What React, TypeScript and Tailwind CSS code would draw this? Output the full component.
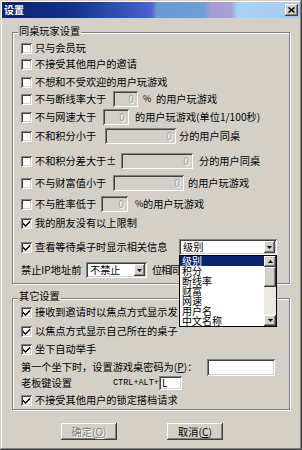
import React from "react";

const sunken =
  "shadow-[inset_1px_1px_#808080,inset_-1px_-1px_#ffffff,inset_2px_2px_#404040,inset_-2px_-2px_#d4d0c8]";
const raised =
  "shadow-[inset_-1px_-1px_#404040,inset_1px_1px_#ffffff,inset_-2px_-2px_#808080,inset_2px_2px_#d4d0c8]";

function Check({ checked }: { checked?: boolean }) {
  return (
    <div
      className={`w-[11px] h-[11px] shrink-0 bg-white ${sunken} flex items-center justify-center`}
    >
      {checked && (
        <svg width="7" height="7" viewBox="0 0 7 7">
          <path d="M0 2.5 L2.5 5 L7 0.5 L7 2.5 L2.5 7 L0 4.5 Z" fill="#000" />
        </svg>
      )}
    </div>
  );
}

function Row({ mt, children }: { mt: string; children: React.ReactNode }) {
  return <div className={`flex items-center h-[16px] whitespace-nowrap ${mt}`}>{children}</div>;
}

function CbRow({
  mt,
  checked,
  label,
  children,
}: {
  mt: string;
  checked?: boolean;
  label?: React.ReactNode;
  children?: React.ReactNode;
}) {
  return (
    <Row mt={mt}>
      <Check checked={checked} />
      <div className="ml-[3px] flex items-center">{label}</div>
      {children}
    </Row>
  );
}

function DisInput({ w }: { w: string }) {
  return (
    <div
      className={`${sunken} ${w} bg-[#d4d0c8] h-[16px] shrink-0 flex items-center justify-end pr-[4px] text-[#a4a4a4] [text-shadow:1px_1px_#ffffff]`}
    >
      0
    </div>
  );
}

function Arrow({ up }: { up?: boolean }) {
  return (
    <svg width="5" height="3" viewBox="0 0 5 3">
      <path d={up ? "M0 3H5L2.5 0Z" : "M0 0H5L2.5 3Z"} fill="#000" />
    </svg>
  );
}

function Select({ w, text }: { w: string; text: string }) {
  return (
    <div className={`${sunken} ${w} bg-white h-[16px] shrink-0 flex items-center pl-[4px] pr-[2px]`}>
      <span className="flex-1">{text}</span>
      <div className={`${raised} bg-[#d4d0c8] w-[11px] h-[12px] flex items-center justify-center`}>
        <Arrow />
      </div>
    </div>
  );
}

export default function App() {
  const items = ["级别", "积分", "断线率", "财富", "网速", "用户名", "中文名称"];
  return (
    <div className="relative w-[302px] h-[450px] overflow-hidden bg-[#d4d0c8] p-[2px] font-['Noto_Sans_CJK_SC','Noto_Sans',sans-serif] text-[10.2px] leading-[12px] text-black shadow-[inset_-1px_-1px_#404040,inset_1px_1px_#d4d0c8,inset_-2px_-2px_#808080,inset_2px_2px_#ffffff]">
      {/* title bar */}
      <div className="h-[16px] flex items-center justify-between pl-[2px] pr-[2px] bg-[linear-gradient(90deg,#0a246a_0%,#12308a_22%,#3456b6_42%,#5060d0_50%,#6a98d4_52%,#6e9fd8_68%,#a49cd4_70%,#a8a2d6_77%,#a8d2f2_79%,#a6caf0_100%)]">
        <span className="text-white font-bold text-[10px]">设置</span>
        <div className={`${raised} bg-[#d4d0c8] w-[13px] h-[12px] flex items-center justify-center`}>
          <svg width="7" height="6" viewBox="0 0 7 6">
            <path d="M0.5 0.5 L6.5 5.5 M6.5 0.5 L0.5 5.5" stroke="#000" strokeWidth="1.6" />
          </svg>
        </div>
      </div>

      <div className="pl-[10px]">
        {/* group 1 */}
        <div className="relative mt-[14px] w-[278px] border border-[#808080] shadow-[inset_1px_1px_#ffffff,1px_1px_#ffffff] pt-[7px] pb-[5px] pl-[8px]">
          <span className="absolute top-[-8px] left-[5px] px-[1px] bg-[#d4d0c8]">同桌玩家设置</span>
          <CbRow mt="mt-0" label="只与会员玩" />
          <CbRow mt="mt-0" label="不接受其他用户的邀请" />
          <CbRow mt="mt-[2px]" label="不想和不受欢迎的用户玩游戏" />
          <CbRow mt="mt-[1px]" label={<span className="w-[78px]">不与断线率大于</span>}>
            <DisInput w="w-[25px]" />
            <span className="ml-[5px] w-[13px] text-[9px]">%</span>
            <span>的用户玩游戏</span>
          </CbRow>
          <CbRow mt="mt-[2px]" label={<span className="w-[68px]">不与网速大于</span>}>
            <DisInput w="w-[26px]" />
            <span className="ml-[6px]">的用户玩游戏(单位1/100秒)</span>
          </CbRow>
          <CbRow mt="mt-[3px]" label={<span className="w-[70px]">不和积分小于</span>}>
            <DisInput w="w-[71px]" />
            <span className="ml-[3px]">分的用户同桌</span>
          </CbRow>
          <CbRow mt="mt-[9px]" label={<span className="w-[86px]">不和积分差大于±</span>}>
            <DisInput w="w-[72px]" />
            <span className="ml-[6px]">分的用户同桌</span>
          </CbRow>
          <CbRow mt="mt-[6px]" label={<span className="w-[78px]">不与财富值小于</span>}>
            <DisInput w="w-[71px]" />
            <span className="ml-[4px]">的用户玩游戏</span>
          </CbRow>
          <CbRow mt="mt-[5px]" label={<span className="w-[66px]">不与胜率低于</span>}>
            <DisInput w="w-[27px]" />
            <span className="ml-[7px] w-[8px] text-[9px]">%</span>
            <span>的用户玩游戏</span>
          </CbRow>
          <CbRow mt="mt-[3px]" checked label="我的朋友没有以上限制" />
          <CbRow mt="mt-[8px]" checked label={<span className="w-[144px]">查看等待桌子时显示相关信息</span>}>
            <Select w="w-[98px]" text="级别" />
          </CbRow>
          <Row mt="mt-[7px]">
            <span className="w-[65px]">禁止IP地址前</span>
            <Select w="w-[61px]" text="不禁止" />
            <span className="ml-[5px] tracking-[-1.2px]">位相同</span>
          </Row>
        </div>

        {/* group 2 */}
        <div className="relative mt-[14px] w-[278px] border border-[#808080] shadow-[inset_1px_1px_#ffffff,1px_1px_#ffffff] pt-[5px] pb-[1px] pl-[8px]">
          <span className="absolute top-[-9px] left-[5px] px-[1px] bg-[#d4d0c8]">其它设置</span>
          <CbRow mt="mt-0" checked label="接收到邀请时以焦点方式显示发" />
          <CbRow mt="mt-[3px]" checked label="以焦点方式显示自己所在的桌子" />
          <CbRow mt="mt-[2px]" checked label="坐下自动举手" />
          <Row mt="mt-[2px]">
            <span className="w-[186px]">
              第一个坐下时，设置游戏桌密码为(<u>P</u>)：
            </span>
            <div className={`${sunken} bg-white w-[68px] h-[17px] shrink-0`} />
          </Row>
          <Row mt="mt-0">
            <span className="w-[92px]">老板键设置</span>
            <span className="w-[46px] font-['Liberation_Mono',monospace] text-[8.5px]">CTRL+ALT+</span>
            <div className={`${sunken} bg-white w-[23px] h-[14px] shrink-0 flex items-center pl-[3px] text-[10px]`}>
              L
            </div>
          </Row>
          <CbRow mt="mt-[1px]" checked label="不接受其他用户的锁定搭档请求" />
        </div>

        {/* buttons */}
        <div className="mt-[13px] flex ml-[49px] gap-[50px]">
          <div className={`${raised} bg-[#d4d0c8] w-[56px] h-[17px] flex items-center justify-center text-[#808080] [text-shadow:1px_1px_#ffffff]`}>
            确定(<u>O</u>)
          </div>
          <div className={`${raised} bg-[#d4d0c8] w-[56px] h-[17px] flex items-center justify-center`}>
            取消(<u>C</u>)
          </div>
        </div>
      </div>

      {/* open dropdown list */}
      <div className="absolute left-[179px] top-[255px] w-[98px] h-[72px] bg-white border border-black flex z-10">
        <div className="flex-1 flex flex-col">
          {items.map((t, i) => (
            <div
              key={t}
              className={
                i === 0
                  ? "h-[10px] leading-[10px] pl-[2px] text-[10px] bg-[#0a246a] text-white"
                  : "h-[10px] leading-[10px] pl-[2px] text-[10px]"
              }
            >
              {t}
            </div>
          ))}
        </div>
        <div className="w-[12px] flex flex-col bg-[#ece9e4]">
          <div className={`${raised} bg-[#d4d0c8] h-[11px] flex items-center justify-center`}>
            <Arrow up />
          </div>
          <div className={`${raised} bg-[#d4d0c8] h-[20px]`} />
          <div className="flex-1" />
          <div className={`${raised} bg-[#d4d0c8] h-[11px] flex items-center justify-center`}>
            <Arrow />
          </div>
        </div>
      </div>
    </div>
  );
}
